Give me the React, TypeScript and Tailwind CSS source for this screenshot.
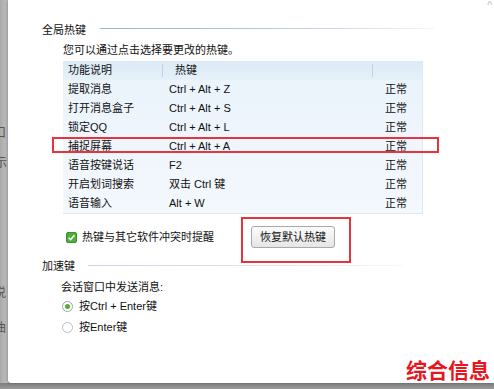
import React from 'react';

const rows = [
  { name: '提取消息', key: 'Ctrl + Alt + Z' },
  { name: '打开消息盒子', key: 'Ctrl + Alt + S' },
  { name: '锁定QQ', key: 'Ctrl + Alt + L' },
  { name: '捕捉屏幕', key: 'Ctrl + Alt + A' },
  { name: '语音按键说话', key: 'F2' },
  { name: '开启划词搜索', key: '双击 Ctrl 键' },
  { name: '语音输入', key: 'Alt + W' },
];

const font = { fontFamily: '"Liberation Sans", "Noto Sans CJK SC", sans-serif' };

function SectionTitle({ label, lineClass }: { label: string; lineClass: string }) {
  return (
    <div className="flex items-center h-[14px] pl-[34px]">
      <span className="leading-[14px]">{label}</span>
      <div className={lineClass} />
    </div>
  );
}

export default function App() {
  return (
    <div
      className="w-[494px] h-[389px] overflow-hidden bg-[#9a9a9a] flex flex-col text-[11px] text-[#111]"
      style={font}
    >
      <div className="flex h-[383px]">
        {/* background window peeking out on the left */}
        <div className="w-[8px] bg-gradient-to-r from-[#a9a9a9] to-[#c4c4c4] overflow-hidden flex flex-col text-[#555] text-[12px]">
          <span className="mt-[125px] -ml-[6px] leading-[16px]">口</span>
          <span className="mt-[14px] -ml-[5px] leading-[16px]">示</span>
          <span className="mt-[114px] -ml-[6px] leading-[16px]">说</span>
          <span className="mt-[19px] -ml-[6px] leading-[16px]">曲</span>
        </div>

        <div className="flex-1 bg-white relative flex flex-col pt-[23px] rounded-bl-[3px] shadow-[-1px_0_3px_rgba(0,0,0,0.25)]">
          <SectionTitle
            label="全局热键"
            lineClass="ml-[14px] w-[334px] h-px -mt-[3px] bg-gradient-to-r from-[#9fb1cf] via-[#b8c6dc] to-[#f2f4f8]"
          />

          <div className="mt-[6px] pl-[55px] leading-[14px]">您可以通过点击选择要更改的热键。</div>

          <div className="mt-[4px] ml-[55px] w-[360px] bg-gradient-to-b from-[#eaf3fb] to-[#f3f8fd] border-r border-b border-[#dde8f2]">
            <div className="flex h-[19px] items-center bg-gradient-to-b from-[#dbeaf6] to-[#e6f0f9]">
              <div className="w-[99px] pl-[5px]">功能说明</div>
              <div className="w-px h-[13px] bg-[#c3d1de]" />
              <div className="w-[209px] pl-[12px]">热键</div>
              <div className="w-px h-[13px] bg-[#c3d1de]" />
            </div>
            {rows.map(r => (
              <div key={r.name} className="flex h-[19px] items-center">
                <div className="w-[99px] pl-[5px]">{r.name}</div>
                <div className="w-[210px] pl-[7px]">{r.key}</div>
                <div className="pl-[13px]">正常</div>
              </div>
            ))}
          </div>

          <div className="mt-[12px] flex items-center h-[22px]">
            <div className="ml-[58px] w-[11px] h-[11px] rounded-[2px] bg-[#4caf3a] border border-[#3c8f2e] flex items-center justify-center">
              <svg viewBox="0 0 10 10" className="w-[9px] h-[9px]">
                <path d="M1.8 5.2 L4 7.3 L8.3 2.5" fill="none" stroke="white" strokeWidth="1.7" />
              </svg>
            </div>
            <span className="ml-[5px]">热键与其它软件冲突时提醒</span>
            <button className="ml-[37px] w-[84px] h-[22px] rounded-[3px] border border-[#a9a9a9] bg-gradient-to-b from-[#fbfbfb] to-[#e6e6e6] text-[11px] text-[#111]">
              恢复默认热键
            </button>
          </div>

          <div className="mt-[11px]">
            <SectionTitle
              label="加速键"
              lineClass="ml-[13px] w-[315px] h-px -mt-[2px] bg-gradient-to-r from-[#c9d3e6] via-[#dde3ee] to-[#f6f7f9]"
            />
          </div>

          <div className="mt-[7px] pl-[53px] leading-[14px]">会话窗口中发送消息:</div>

          <div className="mt-[5px] flex items-center h-[14px] pl-[54px]">
            <div className="w-[11px] h-[11px] rounded-full border border-[#9aa3ad] bg-white flex items-center justify-center">
              <div className="w-[5px] h-[5px] rounded-full bg-[#4caf3a]" />
            </div>
            <span className="ml-[6px]">按Ctrl + Enter键</span>
          </div>

          <div className="mt-[7px] flex items-center h-[14px] pl-[54px]">
            <div className="w-[11px] h-[11px] rounded-full border border-[#b9bfc6] bg-white" />
            <span className="ml-[6px]">按Enter键</span>
          </div>

          {/* annotation boxes */}
          <div className="absolute left-[44px] top-[137px] w-[387px] h-[16px] border-2 border-[#e8323c]" />
          <div className="absolute left-[233px] top-[217px] w-[110px] h-[46px] border-2 border-[#e8323c]" />

          {/* watermark */}
          <div className="absolute left-[398px] top-[358px] text-[21px] leading-[26px] font-bold text-[#e8141e]">
            综合信息
          </div>
          <div className="absolute right-[2px] top-[-2px] text-[#bbb] text-[10px]">^</div>
        </div>
      </div>
      <div className="h-[6px] bg-gradient-to-b from-[#7d7d7d] to-[#9a9a9a]" />
    </div>
  );
}
